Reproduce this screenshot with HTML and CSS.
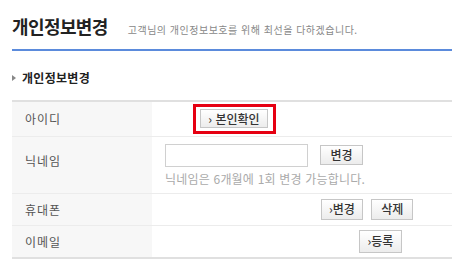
FILE: index.html
```html
<!DOCTYPE html>
<html lang="ko">
<head>
  <meta charset="UTF-8">
  <title>개인정보변경</title>
  <link rel="stylesheet" href="styles.css">
</head>
<body>
  <div class="page">
    <div class="page-head">
      <h1 class="page-title">개인정보변경</h1>
      <span class="page-desc">고객님의 개인정보보호를 위해 최선을 다하겠습니다.</span>
    </div>

    <h2 class="section-title"><span class="arrow"></span>개인정보변경</h2>

    <table class="info-table">
      <tr class="row-id">
        <th>아이디</th>
        <td>
          <span class="highlight"><button class="btn">› 본인확인</button></span>
        </td>
      </tr>
      <tr class="row-nick">
        <th>닉네임</th>
        <td>
          <div class="nick-line">
            <input type="text" class="text-input">
            <button class="btn btn-change">변경</button>
          </div>
          <p class="help">닉네임은 6개월에 1회 변경 가능합니다.</p>
        </td>
      </tr>
      <tr class="row-phone">
        <th>휴대폰</th>
        <td>
          <button class="btn">›변경</button>
          <button class="btn btn-del">삭제</button>
        </td>
      </tr>
      <tr class="row-mail">
        <th>이메일</th>
        <td>
          <button class="btn">›등록</button>
        </td>
      </tr>
    </table>
  </div>
</body>
</html>
```

FILE: styles.css
```css
body {
  margin: 0;
  background: #fff;
  font-family: "Noto Sans CJK KR", "Noto Sans", sans-serif;
  color: #333;
}

.page {
  padding: 12px 0 0 12px;
}

.page-head {
  display: flex;
  align-items: baseline;
  height: 37px;
  border-bottom: 2px solid #5b8bdc;
}

.page-title {
  margin: 0;
  font-size: 18px;
  font-weight: bold;
  letter-spacing: -0.6px;
  color: #222;
  line-height: 28px;
}

.page-desc {
  margin-left: 20px;
  font-size: 10px;
  letter-spacing: 0.5px;
  color: #888;
}

.section-title {
  display: flex;
  align-items: center;
  margin: 19px 0 0;
  font-size: 12px;
  font-weight: bold;
  color: #222;
  line-height: 16px;
  letter-spacing: 0.3px;
}

.arrow {
  width: 0;
  height: 0;
  border-left: 4px solid #888;
  border-top: 3px solid transparent;
  border-bottom: 3px solid transparent;
  margin-right: 6px;
}

.info-table {
  width: 440px;
  margin-top: 14px;
  border-collapse: collapse;
  border-top: 2px solid #e0e0e0;
  border-bottom: 2px solid #e0e0e0;
  font-size: 12px;
}

.info-table th {
  width: 127px;
  padding: 0 0 0 13px;
  background: #f7f7f7;
  text-align: left;
  font-weight: normal;
  color: #555;
  letter-spacing: 1px;
}

.info-table td {
  padding: 0 0 0 13px;
}

.info-table tr + tr th,
.info-table tr + tr td {
  border-top: 1px solid #ececec;
}

.row-id { height: 35px; }
.row-nick { height: 57px; }
.row-phone { height: 32px; }
.row-mail { height: 33px; }

.row-nick th {
  vertical-align: top;
  padding-top: 15px;
}

.row-nick td {
  vertical-align: top;
  padding-top: 7px;
}

.btn {
  height: 20px;
  padding: 0 6px;
  border: 1px solid #c6c6c6;
  background: linear-gradient(#ffffff, #ececec);
  font-family: inherit;
  font-size: 12px;
  font-weight: 500;
  color: #333;
  line-height: 18px;
  cursor: pointer;
}

.highlight {
  display: inline-block;
  margin-left: 28px;
  padding: 2px 5px 3px 4px;
  border: 3px solid #e60012;
}

.highlight .btn {
  width: 68px;
  height: 19px;
  display: block;
}

.nick-line {
  display: flex;
  align-items: center;
}

.text-input {
  width: 143px;
  height: 23px;
  box-sizing: border-box;
  border: 1px solid #d0d0d0;
  margin: 0;
}

.btn-change {
  margin-left: 12px;
  width: 43px;
}

.help {
  margin: 3px 0 0;
  font-size: 12px;
  color: #aaa;
  letter-spacing: 0.2px;
}

.row-phone td {
  padding-left: 169px;
}

.row-phone .btn {
  width: 42px;
  height: 21px;
}

.btn-del {
  margin-left: 5px;
}

.row-mail td {
  padding-left: 207px;
}

.row-mail .btn {
  width: 43px;
  height: 23px;
}
```
